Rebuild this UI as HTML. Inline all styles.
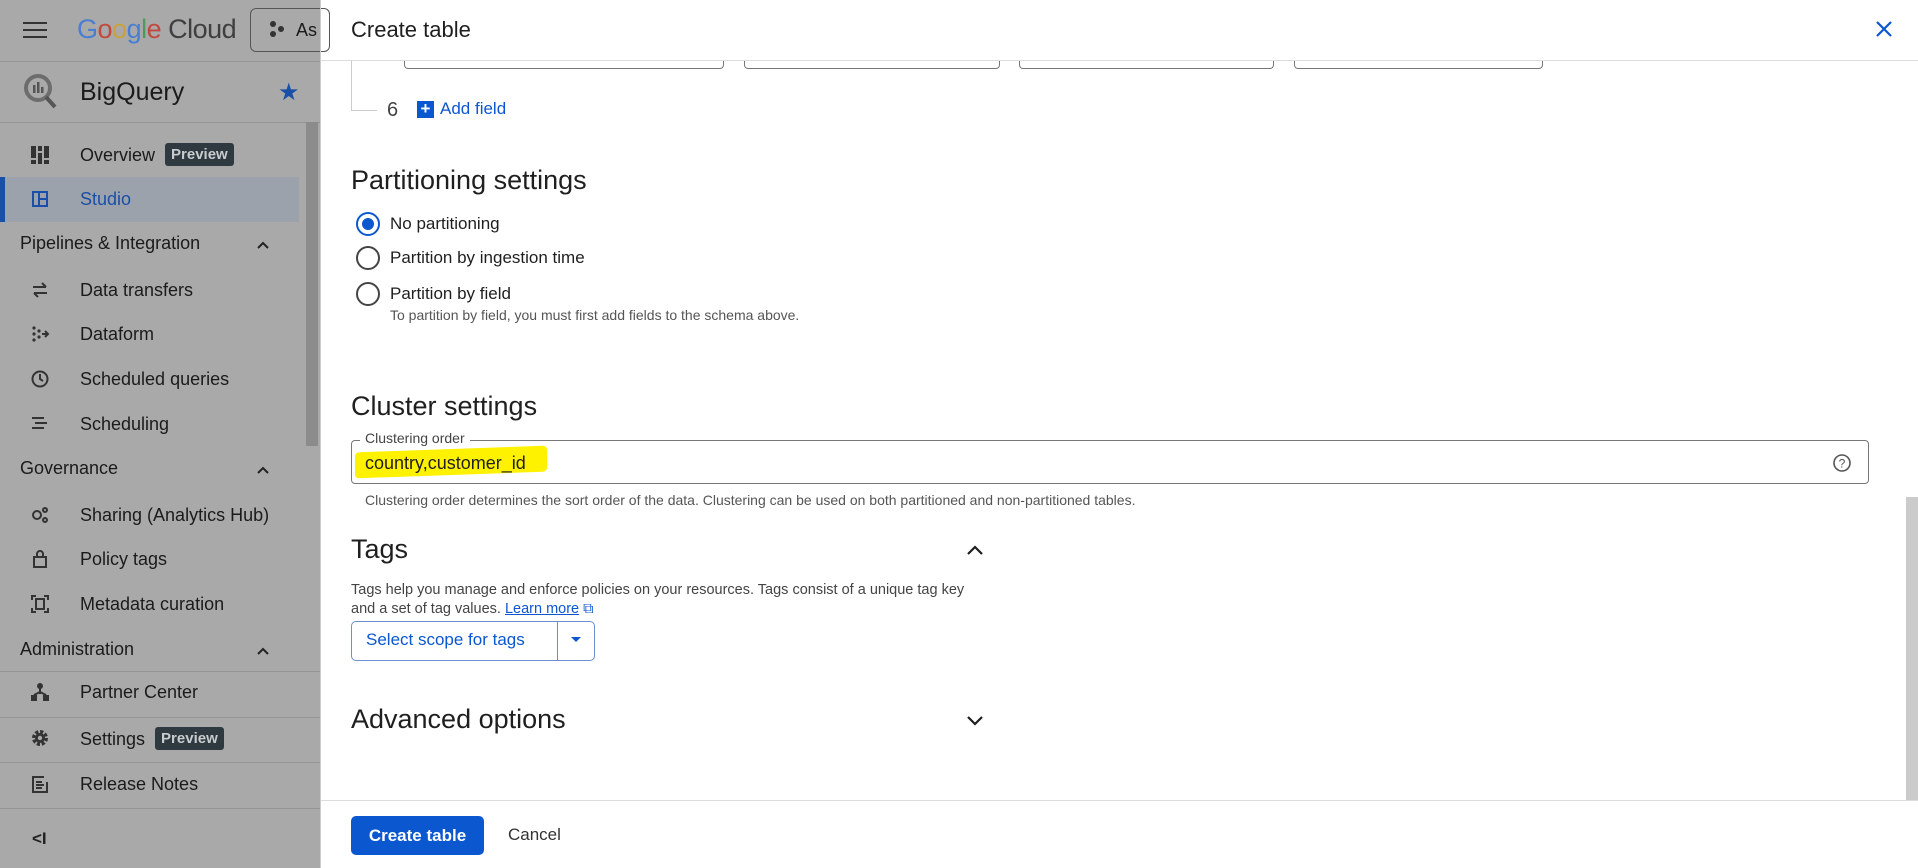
<!DOCTYPE html>
<html><head><meta charset="utf-8"><style>
*{box-sizing:border-box;margin:0;padding:0}
body{width:1918px;height:868px;overflow:hidden;position:relative;font-family:"Liberation Sans",Arial,sans-serif;background:#fff;color:#1f1f1f}
.abs{position:absolute}
#side{left:0;top:0;width:320px;height:868px;background:#a9a9a9;color:#1b1b1b}
.si{position:absolute;left:80px;font-size:18px;white-space:nowrap}
.ic{position:absolute;left:30px;width:20px;height:20px}
.hd{position:absolute;left:20px;font-size:18px;font-weight:500}
.chev{position:absolute;left:256px;width:14px;height:14px}
.hl{position:absolute;left:0;height:1px;width:320px;background:#959595}
.pv{display:inline-block;background:#2f3a40;color:#c8ccce;font-size:15px;font-weight:bold;padding:3px 6px;border-radius:3px;margin-left:10px;vertical-align:2px}
.radio{position:absolute;left:356px;width:24px;height:24px;border:2px solid #444;border-radius:50%}
.lbl{position:absolute;left:390px;font-size:17px}
h2{position:absolute;left:351px;font-weight:normal;font-size:27px;color:#1f1f1f}
.inp{position:absolute;top:61px;height:8px;border:1px solid #777;border-top:none;border-radius:0 0 4px 4px}
</style></head><body>
<div id="side" class="abs">
 <div class="abs" style="left:23px;top:22px;width:24px;height:16px;border-top:2.5px solid #333;border-bottom:2.5px solid #333"><div style="margin-top:4.5px;height:2.5px;background:#333"></div></div>
 <div class="abs" style="left:77px;top:14px;font-size:27px;letter-spacing:-0.5px"><span style="color:#4a7ed0">G</span><span style="color:#c14a3e">o</span><span style="color:#c9a23a">o</span><span style="color:#4a7ed0">g</span><span style="color:#4f9a5a">l</span><span style="color:#c14a3e">e</span> <span style="color:#3f3f3f">Cloud</span></div>
 <div class="abs" style="left:250px;top:8px;width:80px;height:44px;border:1.5px solid #555;border-radius:6px"></div>
 <svg class="abs" style="left:268px;top:20px" width="18" height="18" viewBox="0 0 18 18" fill="#333"><circle cx="5" cy="4" r="3"/><circle cx="5" cy="14" r="3"/><circle cx="13" cy="9" r="3"/></svg>
 <div class="abs" style="left:296px;top:20px;font-size:18px">As</div>
 <div class="hl" style="top:61px"></div>
 <svg class="abs" style="left:22px;top:72px" width="36" height="38" viewBox="0 0 36 38"><circle cx="16" cy="16" r="12" fill="none" stroke="#6d6d6d" stroke-width="4"/><line x1="24" y1="25" x2="33" y2="35" stroke="#555" stroke-width="4"/><rect x="11" y="13" width="2.5" height="8" fill="#555"/><rect x="15" y="10" width="2.5" height="11" fill="#555"/><rect x="19" y="15" width="2.5" height="6" fill="#555"/></svg>
 <div class="abs" style="left:80px;top:78px;font-size:25px">BigQuery</div>
 <div class="abs" style="left:278px;top:78px;font-size:24px;color:#1a4fa8">★</div>
 <div class="hl" style="top:122px"></div>
 <div class="abs" style="left:306px;top:122px;width:12px;height:324px;background:#8c8c8c"></div>
 <svg class="ic" style="top:145px" viewBox="0 0 20 20" fill="#333"><rect x="1" y="1" width="5" height="12"/><rect x="1" y="15" width="5" height="4"/><rect x="8" y="1" width="4" height="5"/><rect x="8" y="8" width="4" height="11"/><rect x="14" y="1" width="5" height="12"/><rect x="14" y="15" width="5" height="4"/></svg>
 <div class="si" style="top:143px">Overview<span class="pv">Preview</span></div>
 <div class="abs" style="left:0;top:177px;width:299px;height:45px;background:#9ca2ab;border-left:5px solid #1a4fa8"></div>
 <svg class="ic" style="top:189px" viewBox="0 0 20 20" fill="none" stroke="#1a4fa8" stroke-width="2"><rect x="3" y="3" width="14" height="14"/><line x1="9" y1="3" x2="9" y2="17"/><line x1="9" y1="10" x2="17" y2="10"/></svg>
 <div class="si" style="top:189px;color:#1a4fa8">Studio</div>
 <div class="hd" style="top:233px">Pipelines &amp; Integration</div>
 <svg class="chev" style="top:238px" viewBox="0 0 14 14"><path d="M2 10L7 5L12 10" fill="none" stroke="#222" stroke-width="2"/></svg>
 <svg class="ic" style="top:280px" viewBox="0 0 20 20" fill="none" stroke="#333" stroke-width="2"><path d="M3 7h13M12 3l4 4M17 13H4M8 17l-4-4"/></svg><div class="si" style="top:280px">Data transfers</div>
 <svg class="ic" style="top:324px" viewBox="0 0 20 20" fill="#333"><circle cx="4" cy="4" r="1.6"/><circle cx="4" cy="10" r="1.6"/><circle cx="4" cy="16" r="1.6"/><circle cx="9" cy="7" r="1.6"/><circle cx="9" cy="13" r="1.6"/><path d="M12 10h6M15 7l3 3-3 3" stroke="#333" stroke-width="2" fill="none"/></svg><div class="si" style="top:324px">Dataform</div>
 <svg class="ic" style="top:369px" viewBox="0 0 20 20" fill="none" stroke="#333" stroke-width="2"><circle cx="10" cy="10" r="7.5"/><path d="M10 5v5l3 2"/></svg><div class="si" style="top:369px">Scheduled queries</div>
 <svg class="ic" style="top:414px" viewBox="0 0 20 20" stroke="#333" stroke-width="2"><path d="M2 4h12M5 9h12M2 14h12"/></svg><div class="si" style="top:414px">Scheduling</div>
 <div class="hd" style="top:458px">Governance</div>
 <svg class="chev" style="top:463px" viewBox="0 0 14 14"><path d="M2 10L7 5L12 10" fill="none" stroke="#222" stroke-width="2"/></svg>
 <svg class="ic" style="top:505px" viewBox="0 0 20 20" fill="none" stroke="#333" stroke-width="2"><circle cx="7" cy="10" r="4"/><circle cx="15" cy="5" r="2"/><circle cx="15" cy="15" r="2"/></svg><div class="si" style="top:505px">Sharing (Analytics Hub)</div>
 <svg class="ic" style="top:549px" viewBox="0 0 20 20" fill="none" stroke="#333" stroke-width="2"><rect x="4" y="8" width="12" height="10"/><path d="M7 8V5a3 3 0 016 0v3"/></svg><div class="si" style="top:549px">Policy tags</div>
 <svg class="ic" style="top:594px" viewBox="0 0 20 20" fill="none" stroke="#333" stroke-width="2"><path d="M2 6V2h4M14 2h4v4M18 14v4h-4M6 18H2v-4"/><rect x="6" y="5" width="8" height="10"/></svg><div class="si" style="top:594px">Metadata curation</div>
 <div class="hd" style="top:639px">Administration</div>
 <svg class="chev" style="top:644px" viewBox="0 0 14 14"><path d="M2 10L7 5L12 10" fill="none" stroke="#222" stroke-width="2"/></svg>
 <div class="hl" style="top:671px"></div>
 <svg class="ic" style="top:682px" viewBox="0 0 20 20" fill="#333"><circle cx="10" cy="4" r="3"/><rect x="9" y="6" width="2" height="6"/><rect x="1" y="13" width="6" height="6"/><rect x="13" y="13" width="6" height="6"/><path d="M4 13l6-3 6 3" stroke="#333" stroke-width="2" fill="none"/></svg><div class="si" style="top:682px">Partner Center</div>
 <div class="hl" style="top:717px"></div>
 <svg class="ic" style="top:728px" viewBox="0 0 20 20"><circle cx="10" cy="10" r="6" fill="none" stroke="#333" stroke-width="4" stroke-dasharray="3 1.7"/><circle cx="10" cy="10" r="5" fill="#333"/><circle cx="10" cy="10" r="2.2" fill="#a9a9a9"/></svg><div class="si" style="top:727px">Settings<span class="pv">Preview</span></div>
 <div class="hl" style="top:762px"></div>
 <svg class="ic" style="top:774px" viewBox="0 0 20 20" fill="none" stroke="#333" stroke-width="2"><path d="M14 3H3v15h14V8"/><path d="M6 8h6M6 11h8M6 14h6"/></svg><div class="si" style="top:774px">Release Notes</div>
 <div class="hl" style="top:808px"></div>
 <div class="abs" style="left:32px;top:829px;font-size:17px;font-weight:bold;color:#222">&lt;I</div>
</div>
<div class="abs" style="left:320px;top:0;width:1px;height:868px;background:#ccc"></div>

<div class="abs" style="left:351px;top:17px;font-size:22px;color:#1f1f1f">Create table</div>
<svg class="abs" style="left:1874px;top:19px" width="20" height="20" viewBox="0 0 20 20"><path d="M3 3L17 17M17 3L3 17" stroke="#0b57d0" stroke-width="2.2"/></svg>
<div class="abs" style="left:321px;top:60px;width:1597px;height:1px;background:#ddd"></div>

<div class="inp" style="left:404px;width:320px"></div>
<div class="inp" style="left:744px;width:256px"></div>
<div class="inp" style="left:1019px;width:255px"></div>
<div class="inp" style="left:1294px;width:249px"></div>
<div class="abs" style="left:351px;top:61px;width:26px;height:50px;border-left:1px solid #ccc;border-bottom:1px solid #ccc"></div>
<div class="abs" style="left:387px;top:99px;font-size:20px;color:#444">6</div>
<div class="abs" style="left:417px;top:101px;width:17px;height:17px;background:#0b57d0;color:#fff;font-size:17px;line-height:16px;text-align:center;font-weight:bold">+</div>
<div class="abs" style="left:440px;top:99px;font-size:17px;color:#0b57d0">Add field</div>

<h2 style="top:165px">Partitioning settings</h2>
<div class="radio" style="top:212px;border-color:#0b57d0"><div style="margin:4px;width:12px;height:12px;border-radius:50%;background:#0b57d0"></div></div>
<div class="lbl" style="top:214px">No partitioning</div>
<div class="radio" style="top:246px"></div><div class="lbl" style="top:248px">Partition by ingestion time</div>
<div class="radio" style="top:282px"></div><div class="lbl" style="top:284px">Partition by field</div>
<div class="abs" style="left:390px;top:307px;font-size:14px;color:#555">To partition by field, you must first add fields to the schema above.</div>

<h2 style="top:391px">Cluster settings</h2>
<div class="abs" style="left:351px;top:440px;width:1518px;height:44px;border:1px solid #777;border-radius:4px"></div>
<div class="abs" style="left:360px;top:430px;padding:0 5px;background:#fff;font-size:14px;color:#444">Clustering order</div>
<div class="abs" style="left:355px;top:449px;width:192px;height:26px;background:#fff200;border-radius:4px;transform:skewY(-2deg)"></div>
<div class="abs" style="left:365px;top:453px;font-size:18px;color:#1f1f1f">country,customer_id</div>
<svg class="abs" style="left:1832px;top:453px" width="20" height="20" viewBox="0 0 20 20"><circle cx="10" cy="10" r="8" fill="none" stroke="#555" stroke-width="1.6"/><text x="10" y="14.5" font-size="12" text-anchor="middle" fill="#555" font-family="Liberation Sans">?</text></svg>
<div class="abs" style="left:365px;top:492px;font-size:14px;color:#555">Clustering order determines the sort order of the data. Clustering can be used on both partitioned and non-partitioned tables.</div>

<h2 style="top:534px">Tags</h2>
<svg class="abs" style="left:965px;top:543px" width="20" height="14" viewBox="0 0 20 14"><path d="M3 11L10 4L17 11" fill="none" stroke="#1f1f1f" stroke-width="2.2"/></svg>
<div class="abs" style="left:351px;top:581px;font-size:14.5px;line-height:19px;color:#444;width:640px">Tags help you manage and enforce policies on your resources. Tags consist of a unique tag key<br>and a set of tag values. <span style="color:#0b57d0;text-decoration:underline">Learn more</span> <span style="color:#0b57d0">⧉</span></div>
<div class="abs" style="left:351px;top:621px;width:244px;height:40px;border:1px solid #6d8fcf;border-radius:5px"></div>
<div class="abs" style="left:557px;top:622px;width:1px;height:38px;background:#6d8fcf"></div>
<div class="abs" style="left:366px;top:630px;font-size:17px;color:#0b57d0">Select scope for tags</div>
<div class="abs" style="left:571px;top:637px;width:0;height:0;border-left:5px solid transparent;border-right:5px solid transparent;border-top:5px solid #0b57d0"></div>

<h2 style="top:704px">Advanced options</h2>
<svg class="abs" style="left:965px;top:713px" width="20" height="14" viewBox="0 0 20 14"><path d="M3 4L10 11L17 4" fill="none" stroke="#1f1f1f" stroke-width="2.2"/></svg>

<div class="abs" style="left:1906px;top:497px;width:12px;height:303px;background:#cbcbcb"></div>
<div class="abs" style="left:321px;top:800px;width:1597px;height:1px;background:#ddd"></div>
<div class="abs" style="left:351px;top:816px;width:133px;height:39px;background:#0b57d0;border-radius:5px;color:#fff;font-size:17px;font-weight:bold;text-align:center;line-height:39px">Create table</div>
<div class="abs" style="left:508px;top:825px;font-size:17px;color:#333">Cancel</div>
</body></html>
